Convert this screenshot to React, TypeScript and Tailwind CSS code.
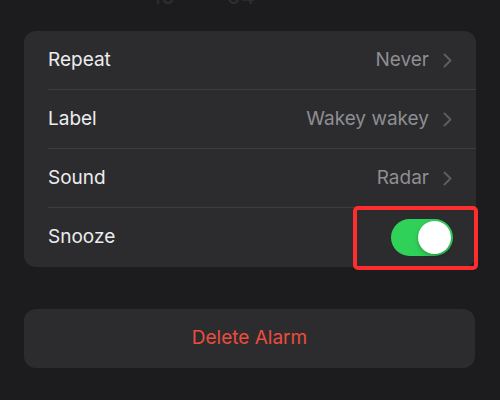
import { useState } from 'react'

const ROWS = [
  { label: 'Repeat', value: 'Never' },
  { label: 'Label', value: 'Wakey wakey' },
  { label: 'Sound', value: 'Radar' },
]

function Chevron() {
  return (
    <svg width="9" height="15" viewBox="0 0 9 15" fill="none" className="ml-[14px]">
      <path d="M1.5 1.5 L7.5 7.5 L1.5 13.5" stroke="#5c5c61" strokeWidth="2" strokeLinecap="round" strokeLinejoin="round" />
    </svg>
  )
}

export default function App() {
  const [snooze, setSnooze] = useState(true)

  return (
    <div className="w-[500px] h-[400px] bg-[#1c1c1e] overflow-hidden font-['Inter',sans-serif]">
      {/* picker leftovers peeking in at the top */}
      <div className="h-[5px] overflow-hidden flex text-[22px] leading-none text-[#2f2f32]">
        <span className="ml-[152px] -mt-[15px]">10</span>
        <span className="ml-[52px] -mt-[15px]">04</span>
      </div>

      <div className="mx-[24px] mt-[26px] bg-[#2c2c2e] rounded-[12px]">
        {ROWS.map(row => (
          <div key={row.label} className="pl-[24px]">
            <div className="h-[59px] flex items-center pr-[24px] border-b border-[#3d3d40] text-[19px]">
              <span className="text-[#ececef]">{row.label}</span>
              <span className="ml-auto text-[#8e8e93]">{row.value}</span>
              <Chevron />
            </div>
          </div>
        ))}
        <div className="pl-[24px] pr-[23px] h-[59px] flex items-center text-[19px]">
          <span className="text-[#ececef]">Snooze</span>
          <div className="ml-auto relative">
            <button
              onClick={() => setSnooze(s => !s)}
              className={`w-[62px] h-[37px] rounded-full flex items-center px-[2px] ${snooze ? 'bg-[#30d158] justify-end' : 'bg-[#39393d] justify-start'}`}
            >
              <span className="w-[33px] h-[33px] rounded-full bg-white shadow-[0_2px_4px_rgba(0,0,0,0.25)]" />
            </button>
            <div className="absolute -left-[38px] -top-[13px] w-[125px] h-[64px] border-[4px] border-[#ff2d2d] rounded-[5px]" />
          </div>
        </div>
      </div>

      <button className="mx-[24px] mt-[42px] w-[451px] h-[59px] bg-[#2c2c2e] rounded-[12px] text-[19px] text-[#eb4c3f] font-['Inter',sans-serif]">
        Delete Alarm
      </button>
    </div>
  )
}
